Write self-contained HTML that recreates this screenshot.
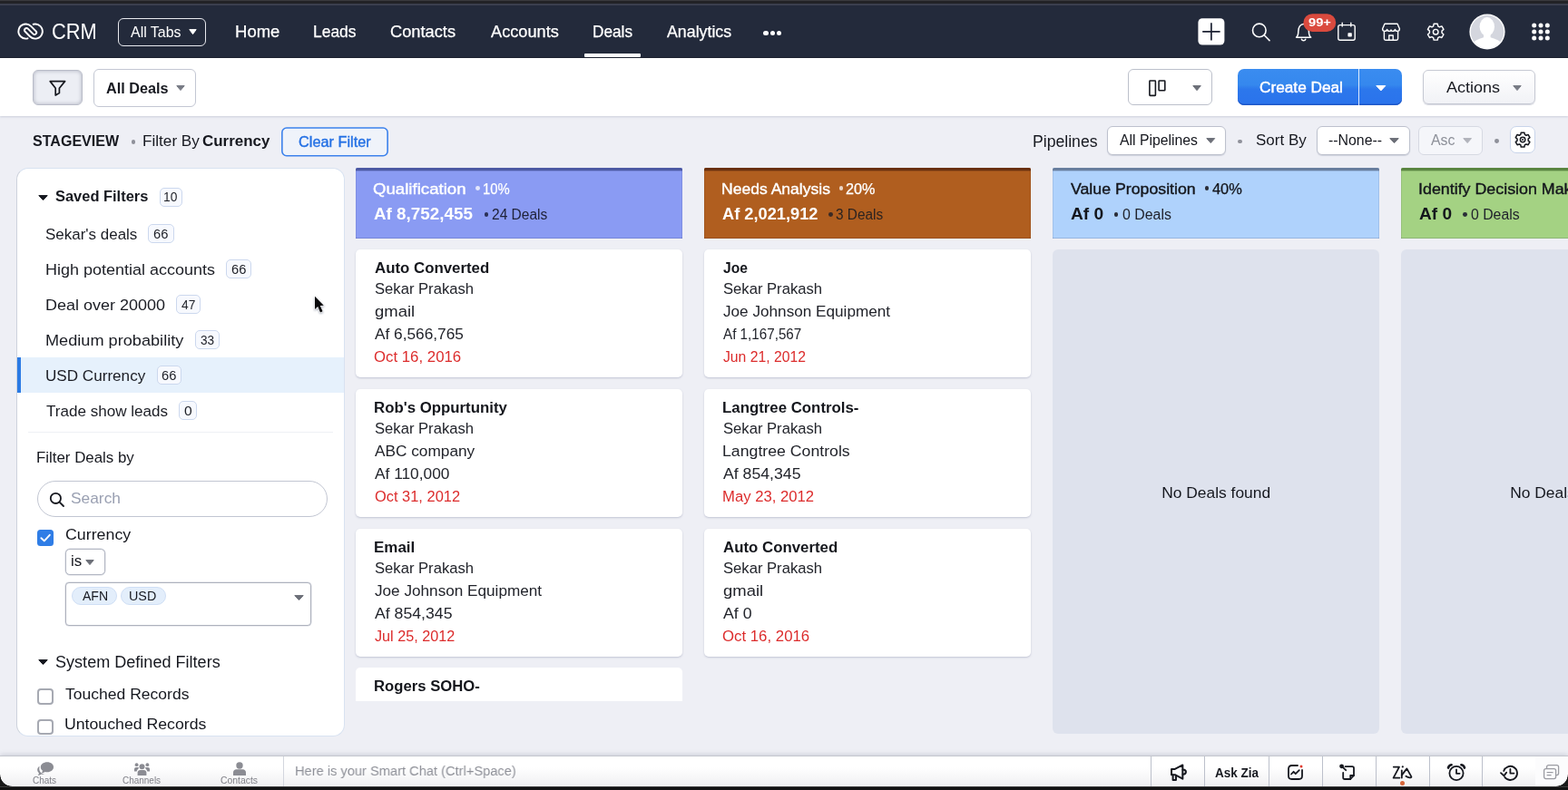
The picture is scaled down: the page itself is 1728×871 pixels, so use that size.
<!DOCTYPE html>
<html lang="en">
<head>
<meta charset="utf-8">
<title>Deals - Zoho CRM</title>
<style>
*{box-sizing:border-box;margin:0;padding:0}
html,body{width:1728px;height:871px;overflow:hidden}
body{font-family:"Liberation Sans",Arial,sans-serif;background:#eeeff5;color:#16181f;position:relative}
#app{position:absolute;left:0;top:0;width:1728px;height:871px;overflow:hidden;will-change:transform}
.abs{position:absolute}
svg{display:block;overflow:visible}
.t{position:absolute;white-space:nowrap;line-height:1;transform-origin:0 0}
#topstrip{left:0;top:0;width:1728px;height:6px;background:linear-gradient(#3a3a3e 0,#3a3a3e 1px,#222226 1px,#222226 4px,#3b3f4e 4px,#3b3f4e 100%)}
#nav{left:0;top:0;width:1728px;height:64px;background:#232a3b;box-shadow:inset 0 -1px 0 #171c2a}
#toolbar{left:0;top:64px;width:1728px;height:63.5px;background:#fff;box-shadow:0 1px 2px rgba(170,175,195,.5)}
#side{background:#fff;border-radius:13px;border:1px solid #d8e2f1;border-left-color:#cdd2dc;overflow:hidden}
.hdr{position:absolute;top:185px;width:360px;height:78px;border-radius:2px 2px 0 0;overflow:hidden;box-shadow:inset 0 -1px 0 rgba(0,0,40,.13),inset 1px 0 0 rgba(0,0,40,.08),inset -1px 0 0 rgba(0,0,40,.08)}
.card{position:absolute;width:360px;height:141px;background:#fff;border-radius:5px;box-shadow:0 1px 2px rgba(150,155,180,.5)}
#bottom{left:0;top:834px;width:1728px;height:33.5px;background:linear-gradient(#fff 35%,#efeff1);box-shadow:0 -1px 0 #c4c7ce,0 -2px 5px rgba(120,125,145,.3)}
#bstrip{left:0;top:867px;width:1728px;height:4px;background:linear-gradient(#6a6a6a 0,#111 1px,#151515 100%)}
</style>
</head>
<body>
<div id="app">
<!-- ===== top navigation ===== -->
<div id="nav" class="abs"></div><div id="topstrip" class="abs"></div>
<svg class="abs" style="left:12px;top:18px" width="44" height="34" viewBox="12 18 44 34" fill="none" stroke="#fff" stroke-width="1.9" stroke-linecap="round"><path d="M30.53 42.33 A8.05 8.05 0 1 1 34.14 28.86 L39.59 34.32 A2.2 2.2 0 0 1 36.48 37.43 L30.72 31.67 A2.2 2.2 0 0 0 27.61 34.78 L33.06 40.24 A8.05 8.05 0 1 0 36.67 26.77"/></svg>
<span class="t" style="left:57.41px;top:24px;font-size:23px;transform:scaleX(0.9486);color:#fff;">CRM</span>
<div style="position:absolute;left:130px;top:19.5px;width:97px;height:31px;border:1.5px solid #e8e9ee;border-radius:6px"></div>
<span class="t" style="left:144px;top:27px;font-size:17.4px;transform:scaleX(0.9162);color:#fff;">All Tabs</span>
<svg class="abs" style="left:207.5px;top:32px" width="9" height="6" viewBox="0 0 9 6"><path d="M0.8 0.6 L8.2 0.6 L4.5 5.6 Z" fill="#fff" stroke="#fff" stroke-width="1" stroke-linejoin="round"/></svg>
<span class="t" style="left:259.02px;top:26px;font-size:18.5px;color:#fff;-webkit-text-stroke:0.25px #fff;">Home</span>
<span class="t" style="left:345.11px;top:26px;font-size:18.5px;transform:scaleX(0.9423);color:#fff;-webkit-text-stroke:0.25px #fff;">Leads</span>
<span class="t" style="left:430.09px;top:26px;font-size:18.5px;transform:scaleX(0.9873);color:#fff;-webkit-text-stroke:0.25px #fff;">Contacts</span>
<span class="t" style="left:540.5px;top:26px;font-size:18.5px;transform:scaleX(0.9837);color:#fff;-webkit-text-stroke:0.25px #fff;">Accounts</span>
<span class="t" style="left:652.62px;top:26px;font-size:18.5px;transform:scaleX(0.9304);color:#fff;-webkit-text-stroke:0.25px #fff;">Deals</span>
<span class="t" style="left:735px;top:26px;font-size:18.5px;transform:scaleX(0.9611);color:#fff;-webkit-text-stroke:0.25px #fff;">Analytics</span>
<div style="position:absolute;left:644px;top:59px;width:62px;height:3.5px;background:#fff;border-radius:1px"></div>
<div class="abs" style="left:841.4px;top:33.7px;width:5.2px;height:5.2px;border-radius:50%;background:#fff"></div>
<div class="abs" style="left:848.6px;top:33.7px;width:5.2px;height:5.2px;border-radius:50%;background:#fff"></div>
<div class="abs" style="left:855.8px;top:33.7px;width:5.2px;height:5.2px;border-radius:50%;background:#fff"></div>
<svg class="abs" style="left:1318px;top:18px" width="34" height="34" viewBox="1318 18 34 34" ><rect x="1320.4" y="20.2" width="29" height="29.4" rx="4.6" fill="#fff"/><path d="M1334.9 25.2V44.6M1325.2 34.9H1344.6" stroke="#1d2233" stroke-width="1.7" fill="none"/></svg>
<svg class="abs" style="left:1377px;top:23px" width="26" height="26" viewBox="0 0 26 26" fill="none" stroke="#fff" stroke-width="1.6" stroke-linecap="round"><circle cx="10.8" cy="10.4" r="7.3"/><path d="M16.2 15.8 L22 21.6"/></svg>
<svg class="abs" style="left:1426px;top:24px" width="22" height="24" viewBox="0 0 22 24" fill="none" stroke="#fff" stroke-width="1.5" stroke-linejoin="round" stroke-linecap="round"><path d="M2.600 17.2 C4.600 15.600 4.800 14 4.800 10.500 C4.800 5.600 7.400 2.400 10.600 2.400 C13.800 2.400 16.400 5.600 16.400 10.500 C16.400 14 16.600 15.600 18.600 17.2 Z"/><path d="M8.400 19.200 A2.300 2.300 0 0 0 12.800 19.200"/></svg>
<svg class="abs" style="left:1434px;top:13px" width="40" height="24" viewBox="1434 13 40 24" ><rect x="1436.4" y="15.200" width="35.800" height="19.700" rx="9.850" fill="#da4a3e"/></svg>
<span class="t" style="left:1442.24px;top:18px;font-size:13px;transform:scaleX(1.1277);font-weight:bold;color:#fff;">99+</span>
<svg class="abs" style="left:1473px;top:24px" width="22" height="22" viewBox="0 0 22 22" fill="none" stroke="#fff" stroke-width="1.4" stroke-linecap="round"><rect x="1.8" y="3.6" width="18.4" height="16.6" rx="2"/><path d="M6.2 1.2V5M15.8 1.2V5"/><rect x="12.4" y="12.2" width="4.4" height="4.4" rx="0.8" fill="#fff" stroke="none"/></svg>
<svg class="abs" style="left:1522px;top:24px" width="22" height="22" viewBox="0 0 22 22" fill="none" stroke="#fff" stroke-width="1.4" stroke-linejoin="round"><path d="M4 2.200H18L20.400 7.800C20.400 9.400 19.400 10.400 18 10.400C16.600 10.400 15.600 9.600 15.400 8.400C15.200 9.600 14.200 10.400 12.800 10.400C11.800 10.400 11.200 9.800 11 9C10.800 9.800 10.200 10.400 9.200 10.400C7.800 10.400 6.800 9.600 6.600 8.400C6.400 9.600 5.400 10.400 4 10.400C2.600 10.400 1.600 9.400 1.600 7.800Z"/><path d="M3.400 10.600V18.600C3.400 19.600 4 20.200 5 20.200H17C18 20.200 18.600 19.600 18.600 18.600V10.600"/><path d="M8.800 20V15H13.200V20"/></svg>
<svg class="abs" style="left:1571.6px;top:24.6px" width="20.4" height="20.4" viewBox="0 0 24 24" fill="none" stroke="#fff" stroke-width="1.7" stroke-linejoin="round"><path d="M9.6 1.5h4.8l.6 3 2 1.1 2.9-1 2.4 4.1-2.3 2v2.6l2.3 2-2.4 4.1-2.9-1-2 1.1-.6 3H9.600l-.6-3-2-1.1-2.9 1-2.4-4.1 2.3-2v-2.6l-2.3-2 2.400-4.1 2.900 1 2-1.100z"/><circle cx="12" cy="12" r="3.3"/></svg>
<svg class="abs" style="left:1618px;top:14px" width="42" height="42" viewBox="1618 14 42 42" ><defs><clipPath id="avc"><circle cx="1639" cy="35" r="18.2"/></clipPath></defs><circle cx="1639" cy="35" r="19.6" fill="#fff"/><circle cx="1639" cy="35" r="18.2" fill="#d4d6de"/><g clip-path="url(#avc)" fill="#fff"><ellipse cx="1638.800" cy="29.500" rx="8.200" ry="10.400"/><path d="M1635 36H1642.600V41.200C1646.500 42.800 1651.500 43.600 1653.500 46.500V56H1624.500V46.500C1626.500 43.600 1631.200 42.800 1635 41.200Z"/></g></svg>
<svg class="abs" style="left:1686px;top:23px" width="24" height="24" viewBox="1686 23 24 24" fill="#fff"><circle cx="1690.7" cy="27.9" r="2.5"/><circle cx="1690.7" cy="34.9" r="2.5"/><circle cx="1690.7" cy="42.1" r="2.5"/><circle cx="1698" cy="27.9" r="2.5"/><circle cx="1698" cy="34.9" r="2.5"/><circle cx="1698" cy="42.1" r="2.5"/><circle cx="1705.3" cy="27.9" r="2.5"/><circle cx="1705.3" cy="34.9" r="2.5"/><circle cx="1705.3" cy="42.1" r="2.5"/></svg>
<!-- ===== toolbar ===== -->
<div id="toolbar" class="abs"></div>
<div style="position:absolute;left:36px;top:76.5px;width:55px;height:39.5px;background:#eceef4;border:1px solid #b9bcc8;border-radius:6px;box-shadow:inset 0 0 4px rgba(120,125,145,.55)"></div>
<svg class="abs" style="left:52px;top:86px" width="24" height="24" viewBox="52 86 24 24" fill="none" stroke="#16181f" stroke-width="1.7" stroke-linejoin="round"><path d="M55.2 89.6H71.6L65.4 97.2V102.6L61.2 105V97.2Z"/></svg>
<div style="position:absolute;left:103px;top:76px;width:113px;height:41.5px;background:#fff;border:1px solid #c3c7d3;border-radius:6px"></div>
<span class="t" style="left:116.59px;top:89px;font-size:17.4px;transform:scaleX(0.9325);font-weight:bold;color:#16181f;">All Deals</span>
<svg class="abs" style="left:194px;top:94.4px" width="10" height="6" viewBox="0 0 10 6"><path d="M0.8 0.6 L9.2 0.6 L5 5.6 Z" fill="#787b85" stroke="#787b85" stroke-width="1" stroke-linejoin="round"/></svg>
<div style="position:absolute;left:1243px;top:76px;width:93px;height:40px;background:#fff;border:1px solid #bcc0cb;border-radius:6px"></div>
<svg class="abs" style="left:1265px;top:87px" width="22" height="21" viewBox="1265 87 22 21" fill="none" stroke="#16181f" stroke-width="1.6"><rect x="1266.9" y="89.05" width="6.5" height="16.35" rx="0.6"/><rect x="1277.1" y="89.05" width="6.7" height="10.75" rx="0.6"/></svg>
<svg class="abs" style="left:1313.9px;top:93.7px" width="10.1" height="6.1" viewBox="0 0 10.1 6.1"><path d="M0.8 0.6 L9.3 0.6 L5.05 5.7 Z" fill="#6c6f78" stroke="#6c6f78" stroke-width="1" stroke-linejoin="round"/></svg>
<div style="position:absolute;left:1364px;top:76px;width:181px;height:40px;background:linear-gradient(#3a8cf0 0,#3588ee 44%,#2c77ec 56%,#2a73ec 100%);border-radius:7px;box-shadow:inset 0 -1.5px 0 #1f58c8"></div>
<div style="position:absolute;left:1497px;top:76px;width:1px;height:40px;background:rgba(255,255,255,.85)"></div>
<span class="t" style="left:1387.64px;top:88px;font-size:17.4px;transform:scaleX(0.9909);color:#fff;-webkit-text-stroke:0.45px #fff;">Create Deal</span>
<svg class="abs" style="left:1515.6px;top:93.6px" width="11.6" height="6.4" viewBox="0 0 11.6 6.4"><path d="M0.8 0.6 L10.8 0.6 L5.8 6 Z" fill="#fff" stroke="#fff" stroke-width="1" stroke-linejoin="round"/></svg>
<div style="position:absolute;left:1568px;top:76.5px;width:124px;height:38.5px;background:linear-gradient(#fff,#f1f2f6);border:1px solid #c6c9d3;border-radius:6px;box-shadow:0 1px 1px rgba(150,155,175,.4)"></div>
<span class="t" style="left:1593.5px;top:88px;font-size:17.4px;transform:scaleX(1.0361);color:#16181f;">Actions</span>
<svg class="abs" style="left:1667px;top:93.5px" width="10" height="6" viewBox="0 0 10 6"><path d="M0.8 0.6 L9.2 0.6 L5 5.6 Z" fill="#787b85" stroke="#787b85" stroke-width="1" stroke-linejoin="round"/></svg>
<!-- ===== view header ===== -->
<span class="t" style="left:35.77px;top:147px;font-size:17.4px;transform:scaleX(0.9229);font-weight:bold;color:#16181f;">STAGEVIEW</span>
<div class="abs" style="left:144.6px;top:153.9px;width:4.8px;height:4.8px;border-radius:50%;background:#8f919a"></div>
<span class="t" style="left:156.63px;top:147px;font-size:17.4px;transform:scaleX(0.9859);color:#16181f;">Filter By</span>
<span class="t" style="left:223.07px;top:147px;font-size:17.4px;transform:scaleX(0.9755);font-weight:bold;color:#16181f;">Currency</span>
<svg class="abs" style="left:308px;top:138px" width="122" height="37" viewBox="308 138 122 37" ><rect x="310.85" y="141" width="116.3" height="30.700" rx="5" fill="#eff3fa" stroke="#3c82ec" stroke-width="1.600"/></svg>
<span class="t" style="left:328.69px;top:148px;font-size:17px;transform:scaleX(0.9580);color:#2470e4;-webkit-text-stroke:0.4px #2470e4;">Clear Filter</span>
<span class="t" style="left:1138.09px;top:148px;font-size:17.5px;transform:scaleX(1.0067);color:#16181f;">Pipelines</span>
<div style="position:absolute;left:1220px;top:139.25px;width:130.75px;height:31.25px;background:#fff;border:1px solid #bdc1cd;border-radius:6px;box-shadow:0 1px 1px rgba(150,155,175,.35)"></div>
<span class="t" style="left:1234px;top:146px;font-size:17px;transform:scaleX(0.9288);color:#16181f;">All Pipelines</span>
<svg class="abs" style="left:1328.5px;top:152px" width="10.5" height="6" viewBox="0 0 10.5 6"><path d="M0.8 0.6 L9.7 0.6 L5.25 5.6 Z" fill="#6c6f78" stroke="#6c6f78" stroke-width="1" stroke-linejoin="round"/></svg>
<div class="abs" style="left:1364.1px;top:153.6px;width:4.8px;height:4.8px;border-radius:50%;background:#8f919a"></div>
<span class="t" style="left:1384.23px;top:146px;font-size:17.4px;transform:scaleX(0.9771);color:#16181f;">Sort By</span>
<div style="position:absolute;left:1451px;top:139.25px;width:102.75px;height:31.25px;background:#fff;border:1px solid #bdc1cd;border-radius:6px;box-shadow:0 1px 1px rgba(150,155,175,.35)"></div>
<span class="t" style="left:1463.79px;top:146px;font-size:17px;transform:scaleX(0.9337);color:#16181f;">--None--</span>
<svg class="abs" style="left:1531.4px;top:152px" width="11" height="6" viewBox="0 0 11 6"><path d="M0.8 0.6 L10.2 0.6 L5.5 5.6 Z" fill="#6c6f78" stroke="#6c6f78" stroke-width="1" stroke-linejoin="round"/></svg>
<div style="position:absolute;left:1563px;top:139.25px;width:70.75px;height:31.25px;background:#f5f6fa;border:1px solid #d6d9e2;border-radius:6px"></div>
<span class="t" style="left:1577px;top:146px;font-size:17px;transform:scaleX(0.9326);color:#8d9099;">Asc</span>
<svg class="abs" style="left:1612px;top:152px" width="10.3" height="6" viewBox="0 0 10.3 6"><path d="M0.8 0.6 L9.5 0.6 L5.15 5.6 Z" fill="#b1b3bb" stroke="#b1b3bb" stroke-width="1" stroke-linejoin="round"/></svg>
<div class="abs" style="left:1647.4px;top:153.4px;width:4.8px;height:4.8px;border-radius:50%;background:#8f919a"></div>
<div style="position:absolute;left:1664.2px;top:139.25px;width:27.6px;height:29.25px;background:#fff;border:1px solid #c8d4ea;border-radius:7px"></div>
<svg class="abs" style="left:1669.2px;top:145.1px" width="18.2" height="18.2" viewBox="0 0 24 24" fill="none" stroke="#16181f" stroke-width="2" stroke-linejoin="round"><path d="M9.6 1.5h4.8l.6 3 2 1.1 2.9-1 2.4 4.1-2.3 2v2.6l2.3 2-2.4 4.1-2.9-1-2 1.1-.6 3H9.600l-.6-3-2-1.1-2.9 1-2.4-4.1 2.3-2v-2.6l-2.3-2 2.400-4.1 2.900 1 2-1.100z"/><circle cx="12" cy="12" r="3.6"/><circle cx="12" cy="12" r="1.3" fill="#16181f" stroke="none"/></svg>
<!-- ===== filter sidebar ===== -->
<div id="side" style="position:absolute;left:18px;top:185px;width:362px;height:626.5px;">
<svg class="abs" style="left:22.5px;top:29.2px" width="11" height="6" viewBox="0 0 11 6"><path d="M0.8 0.6 L10.2 0.6 L5.5 5.6 Z" fill="#16181f" stroke="#16181f" stroke-width="1" stroke-linejoin="round"/></svg>
<span class="t" style="left:42.26px;top:22px;font-size:17.4px;transform:scaleX(0.9454);font-weight:bold;color:#16181f;">Saved Filters</span>
<div style="position:absolute;left:156.5px;top:21px;width:25.75px;height:20.5px;background:#f7f9fe;border:1px solid #ccd8ee;border-radius:5px"></div>
<span class="t" style="left:161.16px;top:24px;font-size:14px;transform:scaleX(0.9857);color:#1d1f26;">10</span>
<div style="position:absolute;left:0px;top:208.25px;width:361px;height:38.25px;background:#e6f1fc"></div>
<div style="position:absolute;left:0px;top:208.25px;width:4px;height:38.25px;background:#2b7ae4"></div>
<span class="t" style="left:31.24px;top:64px;font-size:17.4px;transform:scaleX(0.9757);color:#1b1d24;">Sekar's deals</span>
<div style="position:absolute;left:144.25px;top:61px;width:28.5px;height:21px;background:#f7f9fe;border:1px solid #ccd8ee;border-radius:5px"></div>
<span class="t" style="left:150.26px;top:65px;font-size:14px;transform:scaleX(1.0504);color:#1d1f26;">66</span>
<span class="t" style="left:30.56px;top:103px;font-size:17.4px;transform:scaleX(1.0343);color:#1b1d24;">High potential accounts</span>
<div style="position:absolute;left:230.25px;top:100px;width:27.5px;height:21px;background:#f7f9fe;border:1px solid #ccd8ee;border-radius:5px"></div>
<span class="t" style="left:236.26px;top:104px;font-size:14px;transform:scaleX(1.0504);color:#1d1f26;">66</span>
<span class="t" style="left:30.56px;top:142px;font-size:17.4px;transform:scaleX(1.0348);color:#1b1d24;">Deal over 20000</span>
<div style="position:absolute;left:175.25px;top:139px;width:26.75px;height:21px;background:#f7f9fe;border:1px solid #ccd8ee;border-radius:5px"></div>
<span class="t" style="left:181.22px;top:143px;font-size:14px;transform:scaleX(0.9821);color:#1d1f26;">47</span>
<span class="t" style="left:30.55px;top:181px;font-size:17.4px;transform:scaleX(1.0437);color:#1b1d24;">Medium probability</span>
<div style="position:absolute;left:196.25px;top:178px;width:26.5px;height:21px;background:#f7f9fe;border:1px solid #ccd8ee;border-radius:5px"></div>
<span class="t" style="left:201.96px;top:182px;font-size:14px;transform:scaleX(0.9709);color:#1d1f26;">33</span>
<span class="t" style="left:30.72px;top:220px;font-size:17.4px;transform:scaleX(0.9834);color:#1b1d24;">USD Currency</span>
<div style="position:absolute;left:153.5px;top:216.7px;width:27px;height:21px;background:#f7f9fe;border:1px solid #ccd8ee;border-radius:5px"></div>
<span class="t" style="left:159.26px;top:221px;font-size:14px;transform:scaleX(1.0504);color:#1d1f26;">66</span>
<span class="t" style="left:31.66px;top:259px;font-size:17.4px;transform:scaleX(0.9818);color:#1b1d24;">Trade show leads</span>
<div style="position:absolute;left:178.25px;top:255.7px;width:20px;height:21px;background:#f7f9fe;border:1px solid #ccd8ee;border-radius:5px"></div>
<span class="t" style="left:183.88px;top:260px;font-size:14px;transform:scaleX(1.1161);color:#1d1f26;">0</span>
<div style="position:absolute;left:12px;top:289.5px;width:336px;height:1.5px;background:#eef0f5"></div>
<span class="t" style="left:21.15px;top:310px;font-size:17.4px;transform:scaleX(0.9700);color:#16181f;">Filter Deals by</span>
<div style="position:absolute;left:22.25px;top:343.5px;width:319.5px;height:40.5px;background:#fff;border:1.5px solid #c2c6d2;border-radius:21px"></div>
<svg class="abs" style="left:35px;top:355.5px" width="18" height="18" viewBox="0 0 18 18" fill="none" stroke="#16181f" stroke-width="1.8" stroke-linecap="round"><circle cx="7.4" cy="7.4" r="5.6"/><path d="M11.6 11.6 L16 16"/></svg>
<span class="t" style="left:58.72px;top:355px;font-size:17px;transform:scaleX(1.0205);color:#9aa0b2;">Search</span>
<div style="position:absolute;left:22px;top:397.5px;width:18px;height:18px;background:#2f7de6;border-radius:3.5px"></div>
<svg class="abs" style="left:22px;top:397.5px" width="18" height="18" viewBox="0 0 18 18" fill="none" stroke="#fff" stroke-width="1.9" stroke-linecap="round" stroke-linejoin="round"><path d="M4.4 9.2 L7.8 12.4 L13.8 5.8"/></svg>
<span class="t" style="left:52.61px;top:395px;font-size:17px;transform:scaleX(1.0465);color:#16181f;">Currency</span>
<div style="position:absolute;left:53px;top:419px;width:44px;height:29px;background:#fff;border:1px solid #b3b7c3;border-radius:5px;box-shadow:0 0 0 .5px #d5d8e0"></div>
<span class="t" style="left:59.4px;top:424px;font-size:17px;transform:scaleX(0.9962);color:#16181f;">is</span>
<svg class="abs" style="left:74.5px;top:430.5px" width="10" height="6" viewBox="0 0 10 6"><path d="M0.8 0.6 L9.2 0.6 L5 5.6 Z" fill="#6c6f78" stroke="#6c6f78" stroke-width="1" stroke-linejoin="round"/></svg>
<div style="position:absolute;left:53px;top:456px;width:271px;height:47.5px;background:#fff;border:1px solid #adb1bd;border-radius:4px;box-shadow:0 0 0 .5px #d5d8e0"></div>
<div style="position:absolute;left:60px;top:461px;width:49.5px;height:20px;background:#e3eefb;border:1px solid #cfdff5;border-radius:10px"></div>
<span class="t" style="left:71.5px;top:463px;font-size:15.4px;transform:scaleX(0.9131);color:#16181f;">AFN</span>
<div style="position:absolute;left:113.5px;top:461px;width:50px;height:20px;background:#e3eefb;border:1px solid #cfdff5;border-radius:10px"></div>
<span class="t" style="left:123.43px;top:463px;font-size:15.4px;transform:scaleX(0.9300);color:#16181f;">USD</span>
<svg class="abs" style="left:305px;top:469.5px" width="11" height="6" viewBox="0 0 11 6"><path d="M0.8 0.6 L10.2 0.6 L5.5 5.6 Z" fill="#6c6f78" stroke="#6c6f78" stroke-width="1" stroke-linejoin="round"/></svg>
<svg class="abs" style="left:22.5px;top:541px" width="11" height="6" viewBox="0 0 11 6"><path d="M0.8 0.6 L10.2 0.6 L5.5 5.6 Z" fill="#16181f" stroke="#16181f" stroke-width="1" stroke-linejoin="round"/></svg>
<span class="t" style="left:41.94px;top:535px;font-size:18px;transform:scaleX(1.0034);color:#16181f;">System Defined Filters</span>
<div style="position:absolute;left:22px;top:573px;width:17.5px;height:17.5px;background:#fff;border:2px solid #a6a9b2;border-radius:4px"></div>
<span class="t" style="left:53.15px;top:571px;font-size:17.4px;transform:scaleX(1.0081);color:#16181f;">Touched Records</span>
<div style="position:absolute;left:22px;top:607px;width:17.5px;height:17px;background:#fff;border:2px solid #a6a9b2;border-radius:4px"></div>
<span class="t" style="left:52.17px;top:604px;font-size:17.4px;transform:scaleX(1.0171);color:#16181f;">Untouched Records</span>
</div>
<svg class="abs" style="left:342px;top:322px" width="20" height="26" viewBox="342 322 20 26" ><path d="M347 326.8 L347 341 L350.2 338 L353 344.4 L355.6 343.3 L352.8 337 L356.8 336.7 Z" fill="#0a0a0c" stroke="#fff" stroke-width="1.3" stroke-linejoin="round" paint-order="stroke" style="filter:drop-shadow(0 1px 1px rgba(60,70,100,.45))"/></svg>
<!-- ===== pipeline stages ===== -->
<div class="hdr" style="left:392px;background:#8a9bf3">
<div style="position:absolute;left:0px;top:0px;width:360px;height:3px;background:#4c59a3"></div>
<div style="position:absolute;left:0px;top:3px;width:360px;height:1px;background:#4c59a3;opacity:.35"></div>
<span class="t" style="left:19.16px;top:15px;font-size:17.4px;transform:scaleX(1.0716);color:#fff;-webkit-text-stroke:0.4px #fff;">Qualification</span>
<div class="abs" style="left:132.1px;top:20.2px;width:4.8px;height:4.8px;border-radius:50%;background:rgba(255,255,255,.75)"></div>
<span class="t" style="left:139.89px;top:16px;font-size:16px;transform:scaleX(0.9259);color:#fff;-webkit-text-stroke:0.25px #fff;">10%</span>
<span class="t" style="left:19.53px;top:43px;font-size:17.5px;transform:scaleX(1.0770);font-weight:bold;color:#fff;">Af 8,752,455</span>
<div class="abs" style="left:141.6px;top:49px;width:4.8px;height:4.8px;border-radius:50%;background:#2b3158"></div>
<span class="t" style="left:149.72px;top:44px;font-size:15.6px;transform:scaleX(0.9964);color:#20233a;">24 Deals</span>
</div>
<div class="hdr" style="left:776px;background:#b05e1f">
<div style="position:absolute;left:0px;top:0px;width:360px;height:3px;background:#693010"></div>
<div style="position:absolute;left:0px;top:3px;width:360px;height:1px;background:#693010;opacity:.35"></div>
<span class="t" style="left:18.6px;top:15px;font-size:17.4px;transform:scaleX(1.0092);color:#fff;-webkit-text-stroke:0.4px #fff;">Needs Analysis</span>
<div class="abs" style="left:148.6px;top:20.2px;width:4.8px;height:4.8px;border-radius:50%;background:rgba(255,255,255,.75)"></div>
<span class="t" style="left:156.19px;top:16px;font-size:16px;transform:scaleX(1.0117);color:#fff;-webkit-text-stroke:0.25px #fff;">20%</span>
<span class="t" style="left:19.54px;top:43px;font-size:17.5px;transform:scaleX(1.0424);font-weight:bold;color:#fff;">Af 2,021,912</span>
<div class="abs" style="left:137.1px;top:49px;width:4.8px;height:4.8px;border-radius:50%;background:#3a2a25"></div>
<span class="t" style="left:145.38px;top:44px;font-size:15.6px;transform:scaleX(0.9862);color:#2c2320;">3 Deals</span>
</div>
<div class="hdr" style="left:1160px;background:#afd2fc">
<div style="position:absolute;left:0px;top:0px;width:360px;height:3px;background:#687e9e"></div>
<div style="position:absolute;left:0px;top:3px;width:360px;height:1px;background:#687e9e;opacity:.35"></div>
<span class="t" style="left:19.91px;top:15px;font-size:17.4px;transform:scaleX(1.0195);color:#14161c;-webkit-text-stroke:0.4px #14161c;">Value Proposition</span>
<div class="abs" style="left:167.6px;top:20.2px;width:4.8px;height:4.8px;border-radius:50%;background:#2a2d38"></div>
<span class="t" style="left:176.27px;top:16px;font-size:16px;transform:scaleX(1.0251);color:#14161c;-webkit-text-stroke:0.25px #14161c;">40%</span>
<span class="t" style="left:19.52px;top:43px;font-size:17.5px;transform:scaleX(1.0959);font-weight:bold;color:#14161c;">Af 0</span>
<div class="abs" style="left:67.6px;top:49px;width:4.8px;height:4.8px;border-radius:50%;background:#2a2d38"></div>
<span class="t" style="left:76.66px;top:44px;font-size:15.6px;transform:scaleX(1.0191);color:#20232c;">0 Deals</span>
</div>
<div class="hdr" style="left:1544px;background:#a4d283">
<div style="position:absolute;left:0px;top:0px;width:360px;height:3px;background:#5a8541"></div>
<div style="position:absolute;left:0px;top:3px;width:360px;height:1px;background:#5a8541;opacity:.35"></div>
<span class="t" style="left:18.89px;top:15px;font-size:17.4px;transform:scaleX(1.0257);color:#14161c;-webkit-text-stroke:0.4px #14161c;">Identify Decision Makers</span>
<span class="t" style="left:19.52px;top:43px;font-size:17.5px;transform:scaleX(1.0896);font-weight:bold;color:#14161c;">Af 0</span>
<div class="abs" style="left:68.2px;top:49px;width:4.8px;height:4.8px;border-radius:50%;background:#2a2d38"></div>
<span class="t" style="left:76.67px;top:44px;font-size:15.6px;transform:scaleX(1.0133);color:#20232c;">0 Deals</span>
</div>
<div class="card" style="left:392px;top:275px">
<span class="t" style="left:20.83px;top:12px;font-size:17.4px;transform:scaleX(0.9675);font-weight:bold;color:#14161c;">Auto Converted</span>
<span class="t" style="left:20.5px;top:35px;font-size:17.4px;transform:scaleX(0.9556);color:#22242b;">Sekar Prakash</span>
<span class="t" style="left:20.51px;top:60px;font-size:17.4px;transform:scaleX(1.0627);color:#22242b;">gmail</span>
<span class="t" style="left:21.25px;top:85px;font-size:17.4px;transform:scaleX(0.9927);color:#22242b;">Af 6,566,765</span>
<span class="t" style="left:20.49px;top:110px;font-size:17.4px;transform:scaleX(0.9655);color:#dc2c2c;">Oct 16, 2016</span>
</div>
<div class="card" style="left:392px;top:429px">
<span class="t" style="left:20.16px;top:12px;font-size:17.4px;transform:scaleX(0.9667);font-weight:bold;color:#14161c;">Rob's Oppurtunity</span>
<span class="t" style="left:20.5px;top:35px;font-size:17.4px;transform:scaleX(0.9556);color:#22242b;">Sekar Prakash</span>
<span class="t" style="left:21.25px;top:60px;font-size:17.4px;transform:scaleX(0.9916);color:#22242b;">ABC company</span>
<span class="t" style="left:21.25px;top:85px;font-size:17.4px;transform:scaleX(0.9943);color:#22242b;">Af 110,000</span>
<span class="t" style="left:20.51px;top:110px;font-size:17.4px;transform:scaleX(0.9442);color:#dc2c2c;">Oct 31, 2012</span>
</div>
<div class="card" style="left:392px;top:583px">
<span class="t" style="left:20.15px;top:12px;font-size:17.4px;transform:scaleX(0.9749);font-weight:bold;color:#14161c;">Email</span>
<span class="t" style="left:20.5px;top:35px;font-size:17.4px;transform:scaleX(0.9556);color:#22242b;">Sekar Prakash</span>
<span class="t" style="left:20.99px;top:60px;font-size:17.4px;transform:scaleX(0.9865);color:#22242b;">Joe Johnson Equipment</span>
<span class="t" style="left:21.25px;top:85px;font-size:17.4px;transform:scaleX(1.0158);color:#22242b;">Af 854,345</span>
<span class="t" style="left:21.01px;top:110px;font-size:17.4px;transform:scaleX(0.9312);color:#dc2c2c;">Jul 25, 2012</span>
</div>
<div class="card" style="left:776px;top:275px">
<span class="t" style="left:21.01px;top:12px;font-size:17.4px;transform:scaleX(0.9007);font-weight:bold;color:#14161c;">Joe</span>
<span class="t" style="left:20.5px;top:35px;font-size:17.4px;transform:scaleX(0.9556);color:#22242b;">Sekar Prakash</span>
<span class="t" style="left:20.99px;top:60px;font-size:17.4px;transform:scaleX(0.9865);color:#22242b;">Joe Johnson Equipment</span>
<span class="t" style="left:21.25px;top:85px;font-size:17px;transform:scaleX(0.8949);color:#22242b;">Af 1,167,567</span>
<span class="t" style="left:21.01px;top:110px;font-size:17.4px;transform:scaleX(0.9051);color:#dc2c2c;">Jun 21, 2012</span>
</div>
<div class="card" style="left:776px;top:429px">
<span class="t" style="left:20.16px;top:12px;font-size:17.4px;transform:scaleX(0.9671);font-weight:bold;color:#14161c;">Langtree Controls-</span>
<span class="t" style="left:20.5px;top:35px;font-size:17.4px;transform:scaleX(0.9556);color:#22242b;">Sekar Prakash</span>
<span class="t" style="left:19.83px;top:60px;font-size:17.4px;transform:scaleX(1.0178);color:#22242b;">Langtree Controls</span>
<span class="t" style="left:21.25px;top:85px;font-size:17.4px;transform:scaleX(1.0158);color:#22242b;">Af 854,345</span>
<span class="t" style="left:19.92px;top:110px;font-size:17.4px;transform:scaleX(0.9590);color:#dc2c2c;">May 23, 2012</span>
</div>
<div class="card" style="left:776px;top:583px">
<span class="t" style="left:20.83px;top:12px;font-size:17.4px;transform:scaleX(0.9675);font-weight:bold;color:#14161c;">Auto Converted</span>
<span class="t" style="left:20.5px;top:35px;font-size:17.4px;transform:scaleX(0.9556);color:#22242b;">Sekar Prakash</span>
<span class="t" style="left:20.51px;top:60px;font-size:17.4px;transform:scaleX(1.0627);color:#22242b;">gmail</span>
<span class="t" style="left:21.25px;top:85px;font-size:17.4px;transform:scaleX(1.0193);color:#22242b;">Af 0</span>
<span class="t" style="left:20.49px;top:110px;font-size:17.4px;transform:scaleX(0.9655);color:#dc2c2c;">Oct 16, 2016</span>
</div>
<div class="card" style="left:392px;top:736px;height:37px;border-radius:5px 5px 0 0;overflow:hidden;box-shadow:none">
<span class="t" style="left:20.16px;top:12px;font-size:17.4px;transform:scaleX(0.9599);font-weight:bold;color:#14161c;">Rogers SOHO-</span>
<span class="t" style="left:20.5px;top:35px;font-size:17.4px;transform:scaleX(0.9556);color:#22242b;">Sekar Prakash</span>
</div>
<div style="position:absolute;left:1160px;top:275px;width:360px;height:533.5px;background:#dee2ed;border-radius:6px"></div>
<span class="t" style="left:1280.21px;top:535px;font-size:17.4px;color:#16181f;">No Deals found</span>
<div style="position:absolute;left:1544px;top:275px;width:196px;height:533.5px;background:#dee2ed;border-radius:6px"></div>
<span class="t" style="left:1664.21px;top:535px;font-size:17.4px;color:#16181f;">No Deals found</span>
<!-- ===== bottom bar ===== -->
<div id="bottom" class="abs"></div>
<svg class="abs" style="left:40.5px;top:840px" width="18" height="15.5" viewBox="0 0 18 15.5" fill="#8b8c93"><path d="M11 0.3C6.900 0.3 3.800 2.700 3.800 5.800C3.800 7.400 4.600 8.800 6 9.800C5.800 10.900 5.200 11.800 4.500 12.400C6.200 12.400 7.600 11.800 8.600 11C9.400 11.200 10.200 11.300 11 11.300C15.100 11.300 18 8.900 18 5.800C18 2.700 15.100 0.300 11 0.300Z"/><path d="M2.600 4.800C1 5.800 0.200 7.200 0.200 8.800C0.200 10.200 0.900 11.400 2 12.300C1.800 13.300 1.300 14.200 0.600 14.800C2.300 14.800 3.700 14.200 4.600 13.500C5.800 13.800 7.200 13.700 8.400 13.300C5 13.300 2.300 11 2.300 8C2.300 6.900 2.400 5.800 2.600 4.800Z"/></svg>
<span class="t" style="left:36.25px;top:855px;font-size:10.5px;transform:scaleX(0.9486);color:#808188;">Chats</span>
<svg class="abs" style="left:148px;top:840px" width="17" height="15" viewBox="0 0 17 15" fill="#8b8c93"><circle cx="8.5" cy="5.200" r="3"/><path d="M3.600 15V11.800C3.600 10 5 8.900 6.500 8.900H10.500C12 8.900 13.400 10 13.400 11.800V15Z"/><circle cx="2.600" cy="3.200" r="1.900"/><circle cx="14.400" cy="3.200" r="1.900"/><path d="M0 10.500V8C0 6.800 1 6 2 6H3.800C4.400 6 4.900 6.200 5.200 6.600C4.800 7.400 3.400 8.400 2.600 10.500Z"/><path d="M17 10.500V8C17 6.800 16 6 15 6H13.200C12.600 6 12.100 6.200 11.800 6.600C12.200 7.400 13.600 8.400 14.400 10.500Z"/></svg>
<span class="t" style="left:135.25px;top:855px;font-size:10.5px;transform:scaleX(0.9489);color:#808188;">Channels</span>
<svg class="abs" style="left:256.5px;top:840px" width="14" height="15" viewBox="0 0 14 15" fill="#8b8c93"><circle cx="7" cy="4" r="3.700"/><path d="M0 15V11.600C0 9.600 1.600 8.300 3.400 8.300H10.600C12.400 8.300 14 9.600 14 11.600V15Z"/></svg>
<span class="t" style="left:242.88px;top:855px;font-size:10.5px;transform:scaleX(0.9894);color:#808188;">Contacts</span>
<div style="position:absolute;left:312px;top:834px;width:1px;height:33px;background:#d3d6de"></div>
<span class="t" style="left:324.58px;top:842px;font-size:15.4px;transform:scaleX(0.9514);color:#8e9098;">Here is your Smart Chat (Ctrl+Space)</span>
<div style="position:absolute;left:1268px;top:834px;width:1.3px;height:33px;background:#bcc0cb"></div>
<div style="position:absolute;left:1327px;top:834px;width:1.3px;height:33px;background:#bcc0cb"></div>
<div style="position:absolute;left:1398px;top:834px;width:1.3px;height:33px;background:#bcc0cb"></div>
<div style="position:absolute;left:1457px;top:834px;width:1.3px;height:33px;background:#bcc0cb"></div>
<div style="position:absolute;left:1516px;top:834px;width:1.3px;height:33px;background:#bcc0cb"></div>
<div style="position:absolute;left:1575px;top:834px;width:1.3px;height:33px;background:#bcc0cb"></div>
<div style="position:absolute;left:1633px;top:834px;width:1.3px;height:33px;background:#bcc0cb"></div>
<svg class="abs" style="left:1286.5px;top:840.8px" width="23.5" height="21.3" viewBox="0 0 21 19" fill="none" stroke="#16181f" stroke-width="1.8" stroke-linejoin="round" stroke-linecap="round"><path d="M3.600 6.200H7L14.600 2.200V15.800L7 11.800H3.600Z"/><path d="M5 12V17H8V12.400"/><path d="M14.800 6.600C16.600 6.600 17.800 7.600 17.800 9C17.800 10.400 16.600 11.400 14.800 11.400"/></svg>
<span class="t" style="left:1338.66px;top:844px;font-size:15px;transform:scaleX(0.9002);font-weight:bold;color:#16181f;">Ask Zia</span>
<svg class="abs" style="left:1418px;top:841.7px" width="20" height="19" viewBox="0 0 20 19" fill="none" stroke="#16181f" stroke-width="1.8" stroke-linejoin="round" stroke-linecap="round"><path d="M12 2H5.500C3.500 2 2 3.500 2 5.500V13.500C2 15.500 3.500 17 5.500 17H13.500C15.500 17 17 15.500 17 13.500V7"/><path d="M5 11.500L7.600 8.800L9.800 11.200L13.800 7.200"/><circle cx="16" cy="3" r="1.500" fill="#e03a2e" stroke="none"/></svg>
<svg class="abs" style="left:1476px;top:842px" width="19" height="19" viewBox="0 0 19 19" fill="none" stroke="#16181f" stroke-width="1.8" stroke-linejoin="round" stroke-linecap="round"><path d="M6.500 3.200H14.200C15.200 3.200 16 4 16 5V13L12.200 17H6C5 17 4.200 16.200 4.200 15.200V10"/><path d="M2.400 2.600L7.200 7.200"/><circle cx="2.600" cy="2.800" r="1.500" fill="#16181f"/><path d="M16 13H12.200V17"/></svg>
<svg class="abs" style="left:1534px;top:842.7px" width="24" height="18" viewBox="0 0 24 18" fill="none" stroke="#16181f" stroke-width="1.8" stroke-linejoin="round" stroke-linecap="round"><path d="M1.800 2.600H8L1.600 14.600H8.400"/><path d="M10.800 6.400V14.600"/><circle cx="11.800" cy="2.400" r="1.100" fill="#16181f" stroke="none"/><path d="M10.800 11.600L16.400 4.400L21.400 13.400C21.400 14.600 18.400 15 15.400 12.800"/></svg>
<div class="abs" style="left:1542.8px;top:860.5px;width:5.4px;height:5.4px;border-radius:50%;background:#d6663a"></div>
<svg class="abs" style="left:1593.6px;top:841px" width="22" height="21" viewBox="0 0 22 21" fill="none" stroke="#16181f" stroke-width="1.8" stroke-linejoin="round" stroke-linecap="round"><circle cx="11" cy="11.500" r="7.600"/><path d="M11 7.500V11.800H14.600"/><path d="M2 5.600C2.400 3.800 3.800 2.600 5.600 2.200" stroke-width="2.6"/><path d="M20 5.600C19.600 3.800 18.200 2.600 16.400 2.200" stroke-width="2.6"/></svg>
<svg class="abs" style="left:1651.6px;top:841.6px" width="24" height="20" viewBox="0 0 24 20" fill="none" stroke="#16181f" stroke-width="1.8" stroke-linejoin="round" stroke-linecap="round"><path d="M6.200 14.800A7.600 7.600 0 1 0 5.200 8"/><path d="M12.400 6V10.600H16.400"/><path d="M2 10.200L5.400 13.400L8.200 9.600"/></svg>
<div style="position:absolute;left:1692px;top:834px;width:36px;height:33px;background:#fcfcfd"></div>
<svg class="abs" style="left:1700px;top:842px" width="20" height="19" viewBox="0 0 20 19" fill="none" stroke="#9a9ba2" stroke-width="1.3"><rect x="4.600" y="1.600" width="13" height="11" rx="2"/><rect x="1.600" y="5.600" width="13" height="11" rx="2" fill="#fcfcfd"/><path d="M4.600 9.600H11.600M4.600 12.600H9.600"/></svg>
<div id="bstrip" class="abs"></div>
<div class="abs" style="left:0;top:854px;width:13px;height:13px;background:radial-gradient(circle at 13px 0,transparent 12.4px,#1a1a1a 13px)"></div>
<div class="abs" style="left:1715px;top:854px;width:13px;height:13px;background:radial-gradient(circle at 0 0,transparent 12.4px,#1a1a1a 13px)"></div>
</div>
</body>
</html>
